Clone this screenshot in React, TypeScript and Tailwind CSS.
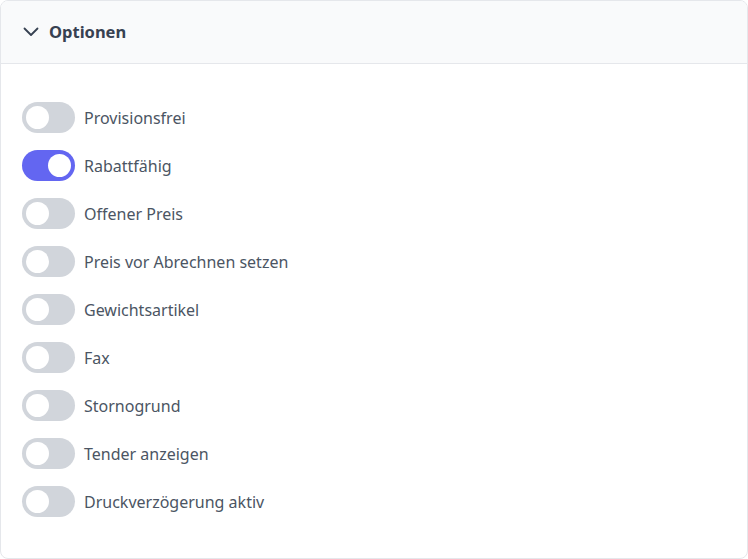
import React, { useState } from "react";

const items = [
  "Provisionsfrei",
  "Rabattfähig",
  "Offener Preis",
  "Preis vor Abrechnen setzen",
  "Gewichtsartikel",
  "Fax",
  "Stornogrund",
  "Tender anzeigen",
  "Druckverzögerung aktiv",
];

function Toggle({ on, onClick }: { on: boolean; onClick: () => void }) {
  return (
    <button
      onClick={onClick}
      className={
        "relative flex h-[31px] w-[53px] shrink-0 items-center rounded-full px-[4px] " +
        (on ? "bg-[#6366f1] justify-end" : "bg-[#d1d5db] justify-start")
      }
    >
      <span className="block h-[23px] w-[23px] rounded-full bg-white" />
    </button>
  );
}

export default function App() {
  const [state, setState] = useState<boolean[]>(items.map((_, i) => i === 1));
  return (
    <div
      className="h-[559px] w-[748px] overflow-hidden rounded-[8px] border border-[#e5e7eb] bg-white"
      style={{ fontFamily: '"Noto Sans", "Open Sans", sans-serif' }}
    >
      <div className="flex h-[63px] items-center gap-[10px] border-b border-[#e5e7eb] bg-[#f9fafb] pl-[22px]">
        <svg width="16" height="16" viewBox="0 0 16 16" fill="none" stroke="#374151" strokeWidth="1.8" strokeLinecap="round" strokeLinejoin="round">
          <path d="M1.5 4.5l6.5 6.5 6.5-6.5" />
        </svg>
        <span className="text-[16.5px] font-bold text-[#374151]">Optionen</span>
      </div>
      <div className="flex flex-col gap-[17px] pl-[21px] pt-[38px]">
        {items.map((label, i) => (
          <div key={label} className="flex items-center gap-[9px]">
            <Toggle
              on={state[i]}
              onClick={() => setState(s => s.map((v, j) => (j === i ? !v : v)))}
            />
            <span className="text-[16px] text-[#4b5563]">{label}</span>
          </div>
        ))}
      </div>
    </div>
  );
}
